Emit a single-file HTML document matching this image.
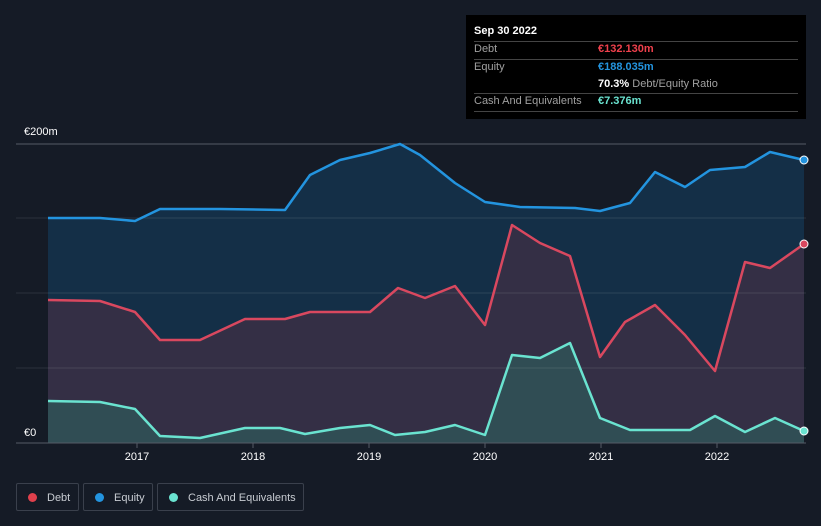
<!DOCTYPE html>
<html><head><meta charset="utf-8"><style>
body{margin:0;width:821px;height:526px;background:#151b26;font-family:"Liberation Sans",sans-serif;overflow:hidden;position:relative}
.tt{position:absolute;left:466px;top:15px;width:340px;height:104px;background:#000;color:#fff;font-size:11px}
.tt .r{position:absolute;left:8px;right:8px;border-top:1px solid #444}
.lab{color:#a0a0a0}
.leg{position:absolute;top:483px;height:28px;border:1px solid #3a404c;border-radius:2px;color:#c8ccd2;font-size:11px;line-height:28px;box-sizing:border-box}
.dot{display:inline-block;width:9px;height:9px;border-radius:50%;margin:0 10px 0 11px;vertical-align:-1px}
</style></head><body>
<svg width="821" height="526" style="position:absolute;left:0;top:0">
<polygon fill="#14324b" opacity="0.9" points="48,218 100,218 135,221 160,209 220,209 285,210 310,175 340,160 370,153 400,144 420,155 455,183 485,202 520,207 575,208 600,211 630,203 655,172 685,187 710,170 745,167 770,152 804,160 804,443 48,443"/>
<polygon fill="#3a2f45" opacity="0.85" points="48,300 100,301 135,312 160,340 200,340 245,319 285,319 310,312 370,312 398,288 425,298 455,286 485,325 512,225 540,243 570,256 600,357 625,322 655,305 685,335 715,371 745,262 770,268 804,244 804,443 48,443"/>
<polygon fill="#2f5558" opacity="0.8" points="48,401 100,402 135,409 160,436 200,438 245,428 280,428 305,434 340,428 370,425 395,435 425,432 455,425 485,435 512,355 540,358 570,343 600,418 630,430 690,430 715,416 745,432 775,418 804,431 804,443 48,443"/>
<g stroke="#ffffff" stroke-opacity="0.1" stroke-width="1"><line x1="16" y1="218" x2="806" y2="218"/><line x1="16" y1="293" x2="806" y2="293"/><line x1="16" y1="368" x2="806" y2="368"/></g>
<g stroke="#555b66"><line x1="16" y1="144" x2="806" y2="144"/><line x1="16" y1="443" x2="806" y2="443"/></g>
<polyline fill="none" stroke="#2394df" stroke-width="2.5" stroke-linejoin="round" points="48,218 100,218 135,221 160,209 220,209 285,210 310,175 340,160 370,153 400,144 420,155 455,183 485,202 520,207 575,208 600,211 630,203 655,172 685,187 710,170 745,167 770,152 804,160"/>
<polyline fill="none" stroke="#d9485f" stroke-width="2.5" stroke-linejoin="round" points="48,300 100,301 135,312 160,340 200,340 245,319 285,319 310,312 370,312 398,288 425,298 455,286 485,325 512,225 540,243 570,256 600,357 625,322 655,305 685,335 715,371 745,262 770,268 804,244"/>
<polyline fill="none" stroke="#6ae3d0" stroke-width="2.5" stroke-linejoin="round" points="48,401 100,402 135,409 160,436 200,438 245,428 280,428 305,434 340,428 370,425 395,435 425,432 455,425 485,435 512,355 540,358 570,343 600,418 630,430 690,430 715,416 745,432 775,418 804,431"/>
<circle cx="804" cy="160" r="4" fill="#2394df" stroke="#fff" stroke-width="1"/>
<circle cx="804" cy="244" r="4" fill="#d9485f" stroke="#fff" stroke-width="1"/>
<circle cx="804" cy="431" r="4" fill="#6ae3d0" stroke="#fff" stroke-width="1"/>
<rect x="16" y="122" width="46" height="20" fill="#151b26"/>
<rect x="16" y="423" width="32" height="19" fill="#151b26"/>
<g fill="#fff" font-size="11" font-family="Liberation Sans"><text x="24" y="135">€200m</text><text x="24" y="436">€0</text>
<g text-anchor="middle"><text x="137" y="460">2017</text><text x="253" y="460">2018</text><text x="369" y="460">2019</text><text x="485" y="460">2020</text><text x="601" y="460">2021</text><text x="717" y="460">2022</text></g></g>
<g stroke="#555b66"><line x1="137" y1="443" x2="137" y2="448"/><line x1="253" y1="443" x2="253" y2="448"/><line x1="369" y1="443" x2="369" y2="448"/><line x1="485" y1="443" x2="485" y2="448"/><line x1="601" y1="443" x2="601" y2="448"/><line x1="717" y1="443" x2="717" y2="448"/></g>
</svg>
<div class="tt">
<div style="position:absolute;left:8px;top:10px;font-weight:bold;font-size:11px">Sep 30 2022</div>
<div class="r" style="top:26px"></div>
<div class="lab" style="position:absolute;left:8px;top:28px">Debt</div><div style="position:absolute;left:132px;top:28px;color:#f0404c;font-weight:bold">€132.130m</div>
<div class="r" style="top:44px"></div>
<div class="lab" style="position:absolute;left:8px;top:46px">Equity</div><div style="position:absolute;left:132px;top:46px;color:#2394df;font-weight:bold">€188.035m</div>
<div style="position:absolute;left:132px;top:63px"><b>70.3%</b> <span class="lab">Debt/Equity Ratio</span></div>
<div class="r" style="top:78px"></div>
<div class="lab" style="position:absolute;left:8px;top:80px">Cash And Equivalents</div><div style="position:absolute;left:132px;top:80px;color:#6ae3d0;font-weight:bold">€7.376m</div>
<div class="r" style="top:96px"></div>
</div>
<div class="leg" style="left:16px;width:63px"><span class="dot" style="background:#e0404c"></span>Debt</div>
<div class="leg" style="left:83px;width:70px"><span class="dot" style="background:#2394df"></span>Equity</div>
<div class="leg" style="left:157px;width:147px"><span class="dot" style="background:#6ae3d0"></span>Cash And Equivalents</div>
</body></html>
